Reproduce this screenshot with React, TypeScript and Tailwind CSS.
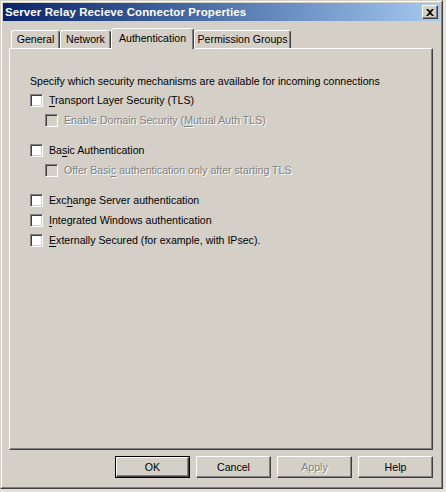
import React from "react";

const FONT = "font-['Liberation_Sans',Arial,sans-serif]";

function U({ children }: { children: React.ReactNode }) {
  return <span className="underline underline-offset-[2px]">{children}</span>;
}

function Check({ disabled }: { disabled?: boolean }) {
  return (
    <span
      className={`block w-[13px] h-[13px] shrink-0 border border-t-[#808080] border-l-[#808080] border-b-white border-r-white shadow-[inset_1px_1px_0_#404040,inset_-1px_-1px_0_#d4d0c8] ${
        disabled ? "bg-[#d4d0c8]" : "bg-white"
      }`}
    />
  );
}

function Option({ label, sub, disabled }: { label: React.ReactNode; sub?: boolean; disabled?: boolean }) {
  return (
    <div className={`flex items-center h-[20px] ${sub ? "pl-[15px]" : ""}`}>
      <Check disabled={disabled} />
      <span
        className={`ml-[6px] ${disabled ? "text-[#808080] [text-shadow:1px_1px_0_#fff]" : "text-black"}`}
      >
        {label}
      </span>
    </div>
  );
}

function Tab({ label, width, active }: { label: string; width: number; active?: boolean }) {
  return (
    <div
      style={{ width }}
      className={`relative flex items-center justify-center whitespace-nowrap rounded-t-[3px] border-l border-t border-l-white border-t-white border-r border-r-[#404040] shadow-[inset_-1px_0_0_#808080] bg-[#d4d0c8] ${
        active ? "h-[21px] -mb-px z-10 pb-[2px]" : "h-[18px]"
      }`}
    >
      {label}
    </div>
  );
}

function Button({ label, isDefault, disabled }: { label: string; isDefault?: boolean; disabled?: boolean }) {
  return (
    <div
      className={`w-[75px] h-[22px] flex items-center justify-center bg-[#d4d0c8] ${
        isDefault ? "border border-black" : ""
      }`}
    >
      <div className="w-full h-full flex items-center justify-center border border-t-white border-l-white border-r-[#404040] border-b-[#404040] shadow-[inset_-1px_-1px_0_#808080]">
        <span className={disabled ? "text-[#808080] [text-shadow:1px_1px_0_#fff]" : "text-black"}>{label}</span>
      </div>
    </div>
  );
}

export default function App() {
  return (
    <div className={`w-[446px] h-[492px] bg-[#e4e1da] ${FONT} text-[10.6px] leading-[13px]`}>
      <div className="w-[443px] h-[489px] bg-[#d4d0c8] border border-t-[#d4d0c8] border-l-[#d4d0c8] border-r-[#404040] border-b-[#404040]">
        <div className="w-full h-full border border-t-white border-l-white border-r-[#808080] border-b-[#808080] p-px flex flex-col">
          {/* Title bar */}
          <div className="h-[18px] flex items-center justify-between bg-gradient-to-r from-[#0a246a] to-[#a6caf0] pl-[2px] pr-[2px]">
            <span className="text-white font-bold text-[11.5px] tracking-[0.1px]">
              Server Relay Recieve Connector Properties
            </span>
            <div className="w-[16px] h-[14px] bg-[#d4d0c8] border border-t-white border-l-white border-r-[#404040] border-b-[#404040] shadow-[inset_-1px_-1px_0_#808080] flex items-center justify-center">
              <svg width="8" height="7" viewBox="0 0 8 7">
                <path d="M0 0h2l2 2 2-2h2L5 3.5 8 7H6L4 5 2 7H0l3-3.5z" fill="#000" />
              </svg>
            </div>
          </div>

          {/* Tabs */}
          <div className="mt-[7px] ml-[6px] mr-[7px] flex flex-col">
            <div className="flex items-end pl-[2px] h-[20px]">
              <Tab label="General" width={49} />
              <Tab label="Network" width={51} />
              <Tab label="Authentication" width={83} active />
              <Tab label="Permission Groups" width={97} />
            </div>
            <div className="h-[402px] border border-t-white border-l-white border-r-[#404040] border-b-[#404040] shadow-[inset_-1px_-1px_0_#808080] pt-[26px] pl-[20px]">
              <div className="h-[13px] mb-[2px]">
                Specify which security mechanisms are available for incoming connections
              </div>
              <Option label={<><U>T</U>ransport Layer Security (TLS)</>} />
              <Option sub disabled label={<>Enable Domain Security (<U>M</U>utual Auth TLS)</>} />
              <div className="h-[10px]" />
              <Option label={<>Ba<U>s</U>ic Authentication</>} />
              <Option sub disabled label={<>Offer Basi<U>c</U> authentication only after starting TLS</>} />
              <div className="h-[10px]" />
              <Option label={<>Exc<U>h</U>ange Server authentication</>} />
              <Option label={<><U>I</U>ntegrated Windows authentication</>} />
              <Option label={<><U>E</U>xternally Secured (for example, with IPsec).</>} />
            </div>
          </div>

          {/* Buttons */}
          <div className="mt-[6px] mr-[7px] flex justify-end gap-[6px]">
            <Button label="OK" isDefault />
            <Button label="Cancel" />
            <Button label="Apply" disabled />
            <Button label="Help" />
          </div>
        </div>
      </div>
    </div>
  );
}
